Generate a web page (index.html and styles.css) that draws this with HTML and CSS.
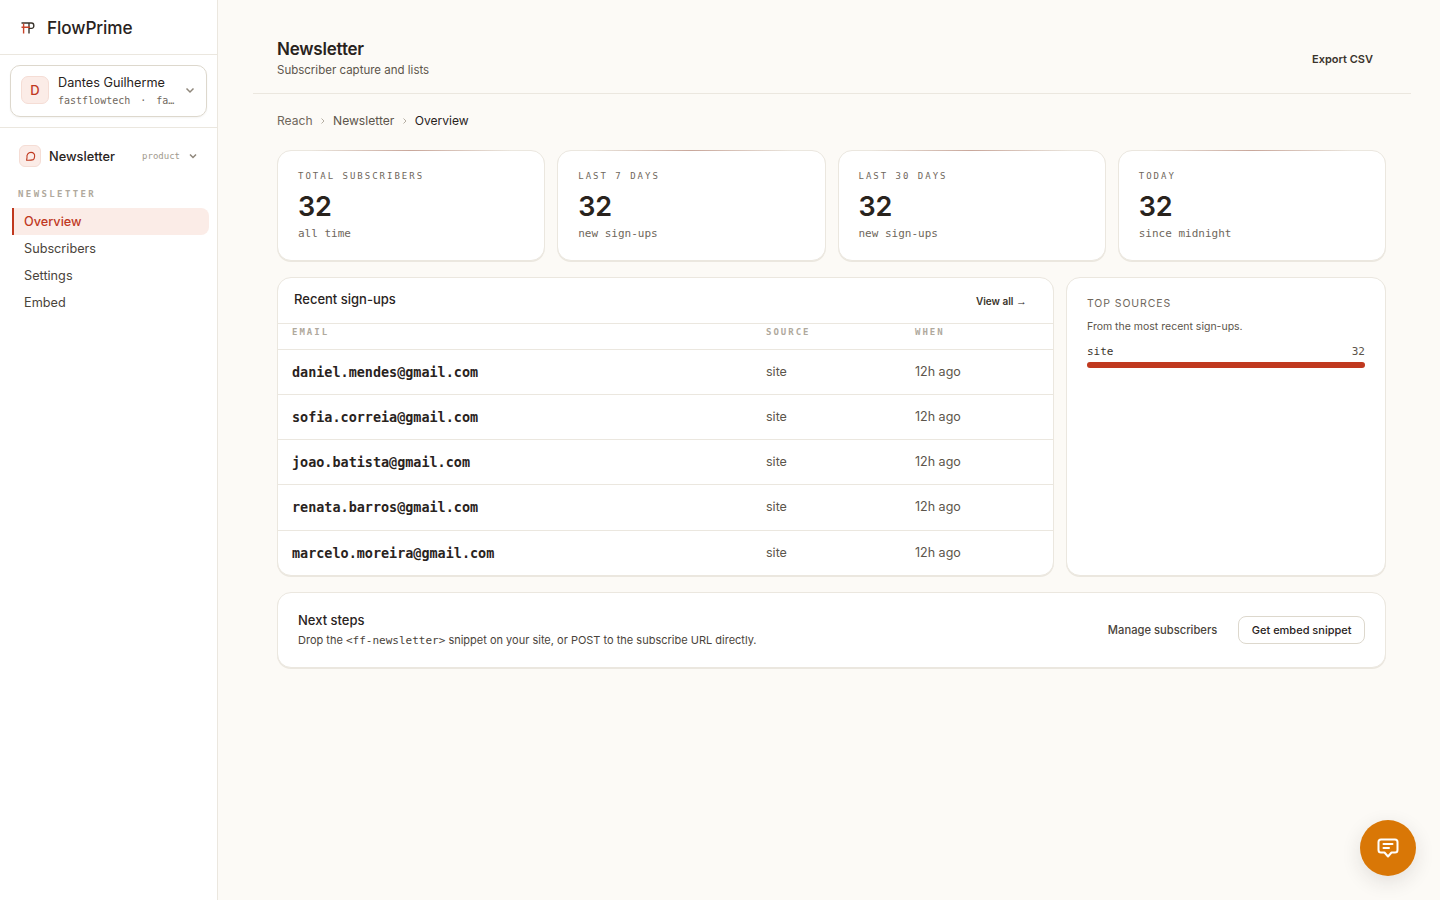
FILE: index.html
```html
<!DOCTYPE html>
<html lang="en">
<head>
    <meta charset="UTF-8">
    <meta name="viewport" content="width=device-width, initial-scale=1.0">
    <title>Newsletter - FlowPrime</title>
    <link rel="stylesheet" href="styles.css">
</head>
<body>
    <aside class="sidebar">
        <div class="brand">
            <svg class="brand-mark" width="14" height="12" viewBox="0 0 14 12" fill="none" stroke-width="1.4">
                <path d="M0.5 1H10.5C13.6 1 13.6 6.4 10.5 6.4H8.2M8 1V11.5" stroke="#3a342c"/>
                <path d="M2.6 1.6V11.5M0.5 5.2H9" stroke="#c8442a"/>
            </svg>
            <span class="brand-name">FlowPrime</span>
        </div>

        <div class="account-wrap">
            <div class="account">
                <div class="avatar">D</div>
                <div class="account-text">
                    <div class="account-name">Dantes Guilherme</div>
                    <div class="account-meta"><span>fastflowtech</span><span class="dot">·</span><span>fa…</span></div>
                </div>
                <svg class="chevron" width="12" height="12" viewBox="0 0 12 12" fill="none" stroke="#8f877b" stroke-width="1.5"><path d="M2.5 4.5L6 8L9.5 4.5"/></svg>
            </div>
        </div>

        <div class="product">
            <div class="product-icon">
                <svg width="12" height="12" viewBox="0 0 12 12" fill="none" stroke="#c0391f" stroke-width="1.1" stroke-linejoin="round"><path d="M2.6 10.2L3 7.6C2.4 4.6 4.4 2.4 7 2.4C9.6 2.4 11 4.4 10.6 6.6C10.4 8 10 9.2 9.4 9.6C7.4 10.2 4.6 10.4 2.6 10.2Z"/></svg>
            </div>
            <span class="product-name">Newsletter</span>
            <span class="product-tag">product</span>
            <svg width="10" height="10" viewBox="0 0 10 10" fill="none" stroke="#8f877b" stroke-width="1.5"><path d="M2 3.5L5 6.5L8 3.5"/></svg>
        </div>

        <div class="nav-label">NEWSLETTER</div>
        <nav class="nav">
            <a class="nav-item active">Overview</a>
            <a class="nav-item">Subscribers</a>
            <a class="nav-item">Settings</a>
            <a class="nav-item">Embed</a>
        </nav>
    </aside>

    <main class="main">
        <header class="page-header">
            <div>
                <h1>Newsletter</h1>
                <p>Subscriber capture and lists</p>
            </div>
            <a class="export">Export CSV</a>
        </header>

        <div class="content">
            <div class="crumbs">
                <span>Reach</span>
                <svg width="8" height="8" viewBox="0 0 8 8" fill="none" stroke="#b5aea3" stroke-width="1"><path d="M2.5 1.5L5 4L2.5 6.5"/></svg>
                <span class="crumb-mid">Newsletter</span>
                <svg width="8" height="8" viewBox="0 0 8 8" fill="none" stroke="#b5aea3" stroke-width="1"><path d="M2.5 1.5L5 4L2.5 6.5"/></svg>
                <span class="crumb-now">Overview</span>
            </div>

            <section class="stats">
                <div class="card stat">
                    <div class="stat-label">TOTAL SUBSCRIBERS</div>
                    <div class="stat-value">32</div>
                    <div class="stat-note">all time</div>
                </div>
                <div class="card stat">
                    <div class="stat-label">LAST 7 DAYS</div>
                    <div class="stat-value">32</div>
                    <div class="stat-note">new sign-ups</div>
                </div>
                <div class="card stat">
                    <div class="stat-label">LAST 30 DAYS</div>
                    <div class="stat-value">32</div>
                    <div class="stat-note">new sign-ups</div>
                </div>
                <div class="card stat">
                    <div class="stat-label">TODAY</div>
                    <div class="stat-value">32</div>
                    <div class="stat-note">since midnight</div>
                </div>
            </section>

            <section class="columns">
                <div class="card signups">
                    <div class="signups-head">
                        <h2>Recent sign-ups</h2>
                        <a class="view-all">View all <span class="arrow">→</span></a>
                    </div>
                    <table>
                        <thead>
                            <tr><th class="col-email">EMAIL</th><th class="col-source">SOURCE</th><th>WHEN</th></tr>
                        </thead>
                        <tbody>
                            <tr><td class="email">daniel.mendes@gmail.com</td><td>site</td><td>12h ago</td></tr>
                            <tr><td class="email">sofia.correia@gmail.com</td><td>site</td><td>12h ago</td></tr>
                            <tr><td class="email">joao.batista@gmail.com</td><td>site</td><td>12h ago</td></tr>
                            <tr><td class="email">renata.barros@gmail.com</td><td>site</td><td>12h ago</td></tr>
                            <tr><td class="email">marcelo.moreira@gmail.com</td><td>site</td><td>12h ago</td></tr>
                        </tbody>
                    </table>
                </div>

                <div class="card sources">
                    <div class="sources-title">TOP SOURCES</div>
                    <p class="sources-sub">From the most recent sign-ups.</p>
                    <div class="source-row"><span class="source-name">site</span><span class="source-count">32</span></div>
                    <div class="bar"><div class="bar-fill" style="width: 100%"></div></div>
                </div>
            </section>

            <section class="card next">
                <div class="next-text">
                    <h3>Next steps</h3>
                    <p>Drop the <code>&lt;ff-newsletter&gt;</code> snippet on your site, or POST to the subscribe URL directly.</p>
                </div>
                <div class="next-actions">
                    <a class="link-btn">Manage subscribers</a>
                    <a class="btn">Get embed snippet</a>
                </div>
            </section>
        </div>
    </main>

    <button class="chat" aria-label="Chat">
        <svg width="24" height="24" viewBox="0 0 24 24" fill="none" stroke="#fff" stroke-width="2" stroke-linejoin="round" stroke-linecap="round">
            <path d="M5 3.5H19C20.4 3.5 21.5 4.6 21.5 6V14C21.5 15.4 20.4 16.5 19 16.5H15.5L12 20.5L8.5 16.5H5C3.6 16.5 2.5 15.4 2.5 14V6C2.5 4.6 3.6 3.5 5 3.5Z"/>
            <path d="M7.5 8H16.5M7.5 12H13"/>
        </svg>
    </button>
</body>
</html>
```

FILE: styles.css
```css
* {
    box-sizing: border-box;
}
body {
    margin: 0;
    display: flex;
    min-height: 900px;
    font-family: Inter, "Liberation Sans", sans-serif;
    color: #29231d;
    background-color: #fcfaf6;
}
h1, h2, h3, p {
    margin: 0;
}

/* sidebar */
.sidebar {
    width: 218px;
    flex: none;
    background: white;
    border-right: 1px solid #ebe7df;
}
.brand {
    height: 55px;
    display: flex;
    align-items: center;
    gap: 12px;
    padding: 1px 21px 0;
    border-bottom: 1px solid #ebe7df;
}
.brand-name {
    font-size: 17.2px;
    font-weight: 500;
    letter-spacing: -0.1px;
}
.account-wrap {
    padding: 10px;
    border-bottom: 1px solid #ebe7df;
}
.account {
    height: 52px;
    display: flex;
    align-items: center;
    padding: 0 10px;
    border: 1px solid #ddd8cd;
    border-radius: 10px;
    box-shadow: 0 1px 2px rgba(41,35,29,0.05);
}
.avatar {
    width: 28px;
    height: 28px;
    flex: none;
    display: flex;
    align-items: center;
    justify-content: center;
    margin-bottom: 2px;
    font-size: 13px;
    font-weight: 500;
    color: #c0391f;
    background: #fbece7;
    border: 1px solid #f5ddd5;
    border-radius: 7px;
}
.account-text {
    flex: 1;
    min-width: 0;
    margin-left: 9px;
}
.account-name {
    font-size: 12.7px;
    line-height: 18px;
}
.account-meta {
    display: flex;
    gap: 10px;
    margin-top: 1px;
    font-family: "DejaVu Sans Mono", monospace;
    font-size: 10px;
    line-height: 15px;
    color: #6f675c;
}
.chevron {
    margin-bottom: 2px;
}
.product {
    display: flex;
    align-items: center;
    padding: 17px 19px 0 19px;
}
.product-icon {
    width: 22px;
    height: 22px;
    display: flex;
    align-items: center;
    justify-content: center;
    background: #fbece7;
    border: 1px solid #f5ddd5;
    border-radius: 6px;
}
.product-name {
    flex: 1;
    margin-left: 8px;
    font-size: 12.8px;
    font-weight: 500;
}
.product-tag {
    margin-right: 8px;
    font-family: "DejaVu Sans Mono", monospace;
    font-size: 9px;
    color: #a19a8e;
}
.nav-label {
    margin: 21px 0 8px 18px;
    font-family: "DejaVu Sans Mono", monospace;
    font-size: 9px;
    line-height: 12px;
    font-weight: 700;
    letter-spacing: 2.4px;
    color: #b0a99d;
}
.nav {
    padding-left: 12px;
    padding-right: 8px;
}
.nav-item {
    display: block;
    height: 27px;
    padding-left: 12px;
    font-size: 12.7px;
    line-height: 27px;
    color: #4a443b;
}
.nav-item.active {
    padding-left: 10px;
    font-weight: 500;
    color: #c0391f;
    background: #fbece7;
    border-left: 2px solid #c0391f;
    border-radius: 0 8px 8px 0;
}

/* main area */
.main {
    flex: 1;
    min-width: 0;
    padding: 0 29px 0 35px;
}
.page-header {
    height: 94px;
    display: flex;
    align-items: center;
    justify-content: space-between;
    padding: 24px 38px 0 24px;
    border-bottom: 1px solid #ebe7df;
}
.page-header h1 {
    font-size: 17px;
    line-height: 20px;
    font-weight: 600;
    letter-spacing: -0.2px;
}
.page-header p {
    margin-top: 2px;
    font-size: 11.5px;
    line-height: 18px;
    color: #5c554b;
}
.export {
    font-size: 11px;
    font-weight: 600;
    color: #3a342c;
}
.content {
    padding: 0 25px 0 24px;
}
.crumbs {
    height: 56px;
    display: flex;
    align-items: center;
    gap: 6.2px;
    padding-bottom: 3px;
    font-size: 12.1px;
    color: #6f675c;
}
.crumb-mid {
    color: #5c554b;
}
.crumb-now {
    color: #29231d;
}

.card {
    position: relative;
    background: white;
    border: 1px solid #ebe7df;
    border-radius: 14px;
    box-shadow: 0 1px 0 #ebe7df;
}
.stats {
    display: grid;
    grid-template-columns: repeat(4, 1fr);
    gap: 12px;
}
.stat {
    height: 111px;
    padding: 19px 20px 0;
}
/* thin accent along the top edge */
.stat::before {
    content: "";
    position: absolute;
    top: -1px;
    left: 12%;
    right: 12%;
    height: 1px;
    background: linear-gradient(90deg, transparent, #c9a79b, transparent);
}
.stat-label {
    font-family: "DejaVu Sans Mono", monospace;
    font-size: 9px;
    line-height: 12px;
    letter-spacing: 2px;
    color: #6f675c;
}
.stat-value {
    margin-top: 8px;
    font-size: 27px;
    line-height: 34px;
    font-weight: 600;
    letter-spacing: -0.3px;
}
.stat-note {
    margin-top: 2px;
    font-family: "DejaVu Sans Mono", monospace;
    font-size: 11px;
    line-height: 15px;
    color: #6f675c;
}

.columns {
    display: grid;
    grid-template-columns: 777px 320px;
    gap: 12px;
    margin-top: 16px;
}
.signups {
    height: 299px;
    overflow: hidden;
}
.signups-head {
    height: 46px;
    display: flex;
    align-items: center;
    justify-content: space-between;
    padding: 0 26px 0 16px;
    border-bottom: 1px solid #ebe7df;
}
.signups-head h2 {
    margin-bottom: 3px;
    font-size: 13px;
    font-weight: 550;
}
.view-all {
    font-size: 10px;
    line-height: 14px;
    font-weight: 600;
    color: #3a342c;
}
.arrow {
    font-family: "Liberation Sans", sans-serif;
    font-size: 11px;
    font-weight: 700;
    color: #29231d;
}
table {
    width: 100%;
    border-collapse: collapse;
    table-layout: fixed;
}
th {
    height: 25px;
    padding: 1px 14px 0;
    text-align: left;
    vertical-align: top;
    font-family: "DejaVu Sans Mono", monospace;
    font-size: 9px;
    line-height: 14px;
    font-weight: 700;
    letter-spacing: 2px;
    color: #b0a99d;
    border-bottom: 1px solid #ebe7df;
}
.col-email {
    width: 474px;
}
.col-source {
    width: 149px;
}
td {
    height: 45px;
    padding: 0 14px 1px;
    font-size: 12.5px;
    color: #5c554b;
    border-bottom: 1px solid #ebe7df;
}
tbody tr:nth-child(4) td {
    height: 46px;
}
tbody tr:last-child td {
    border-bottom: none;
}
.email {
    padding-top: 2px;
    font-family: "DejaVu Sans Mono", monospace;
    font-size: 13.45px;
    font-weight: 700;
    color: #29231d;
}

.sources {
    padding: 19px 20px;
}
.sources-title {
    font-size: 10.5px;
    line-height: 14px;
    letter-spacing: 0.9px;
    color: #6f675c;
}
.sources-sub {
    margin-top: 9px;
    font-size: 10.5px;
    line-height: 14px;
    color: #5c554b;
}
.source-row {
    display: flex;
    justify-content: space-between;
    margin-top: 11px;
    font-family: "DejaVu Sans Mono", monospace;
    font-size: 11px;
    line-height: 14px;
    color: #3a342c;
}
.source-count {
    color: #5c554b;
}
.bar {
    height: 6px;
    margin-top: 3px;
    background: #f2eee7;
    border-radius: 3px;
}
.bar-fill {
    height: 100%;
    background: #c0391f;
    border-radius: 3px;
}

.next {
    height: 76px;
    display: flex;
    align-items: center;
    justify-content: space-between;
    margin-top: 16px;
    padding: 0 20px;
}
.next-text {
    padding-bottom: 1px;
}
.next h3 {
    font-size: 13px;
    line-height: 18px;
    font-weight: 550;
}
.next p {
    margin-top: 3px;
    font-size: 11px;
    line-height: 16px;
    color: #4a443b;
}
.next code {
    font-family: "DejaVu Sans Mono", monospace;
    font-size: 11px;
}
.next-actions {
    display: flex;
    align-items: center;
    gap: 21px;
}
.link-btn {
    font-size: 11.2px;
    font-weight: 500;
    color: #4a443b;
}
.btn {
    padding: 0 12.5px;
    height: 28px;
    line-height: 26px;
    font-size: 11px;
    font-weight: 500;
    color: #29231d;
    border: 1px solid #ddd8cd;
    border-radius: 8px;
}

.chat {
    position: fixed;
    right: 24px;
    bottom: 24px;
    width: 56px;
    height: 56px;
    display: flex;
    align-items: center;
    justify-content: center;
    padding: 0;
    border: none;
    border-radius: 50%;
    background: #d97706;
    box-shadow: 0 6px 20px rgba(41,35,29,0.12);
}
```
